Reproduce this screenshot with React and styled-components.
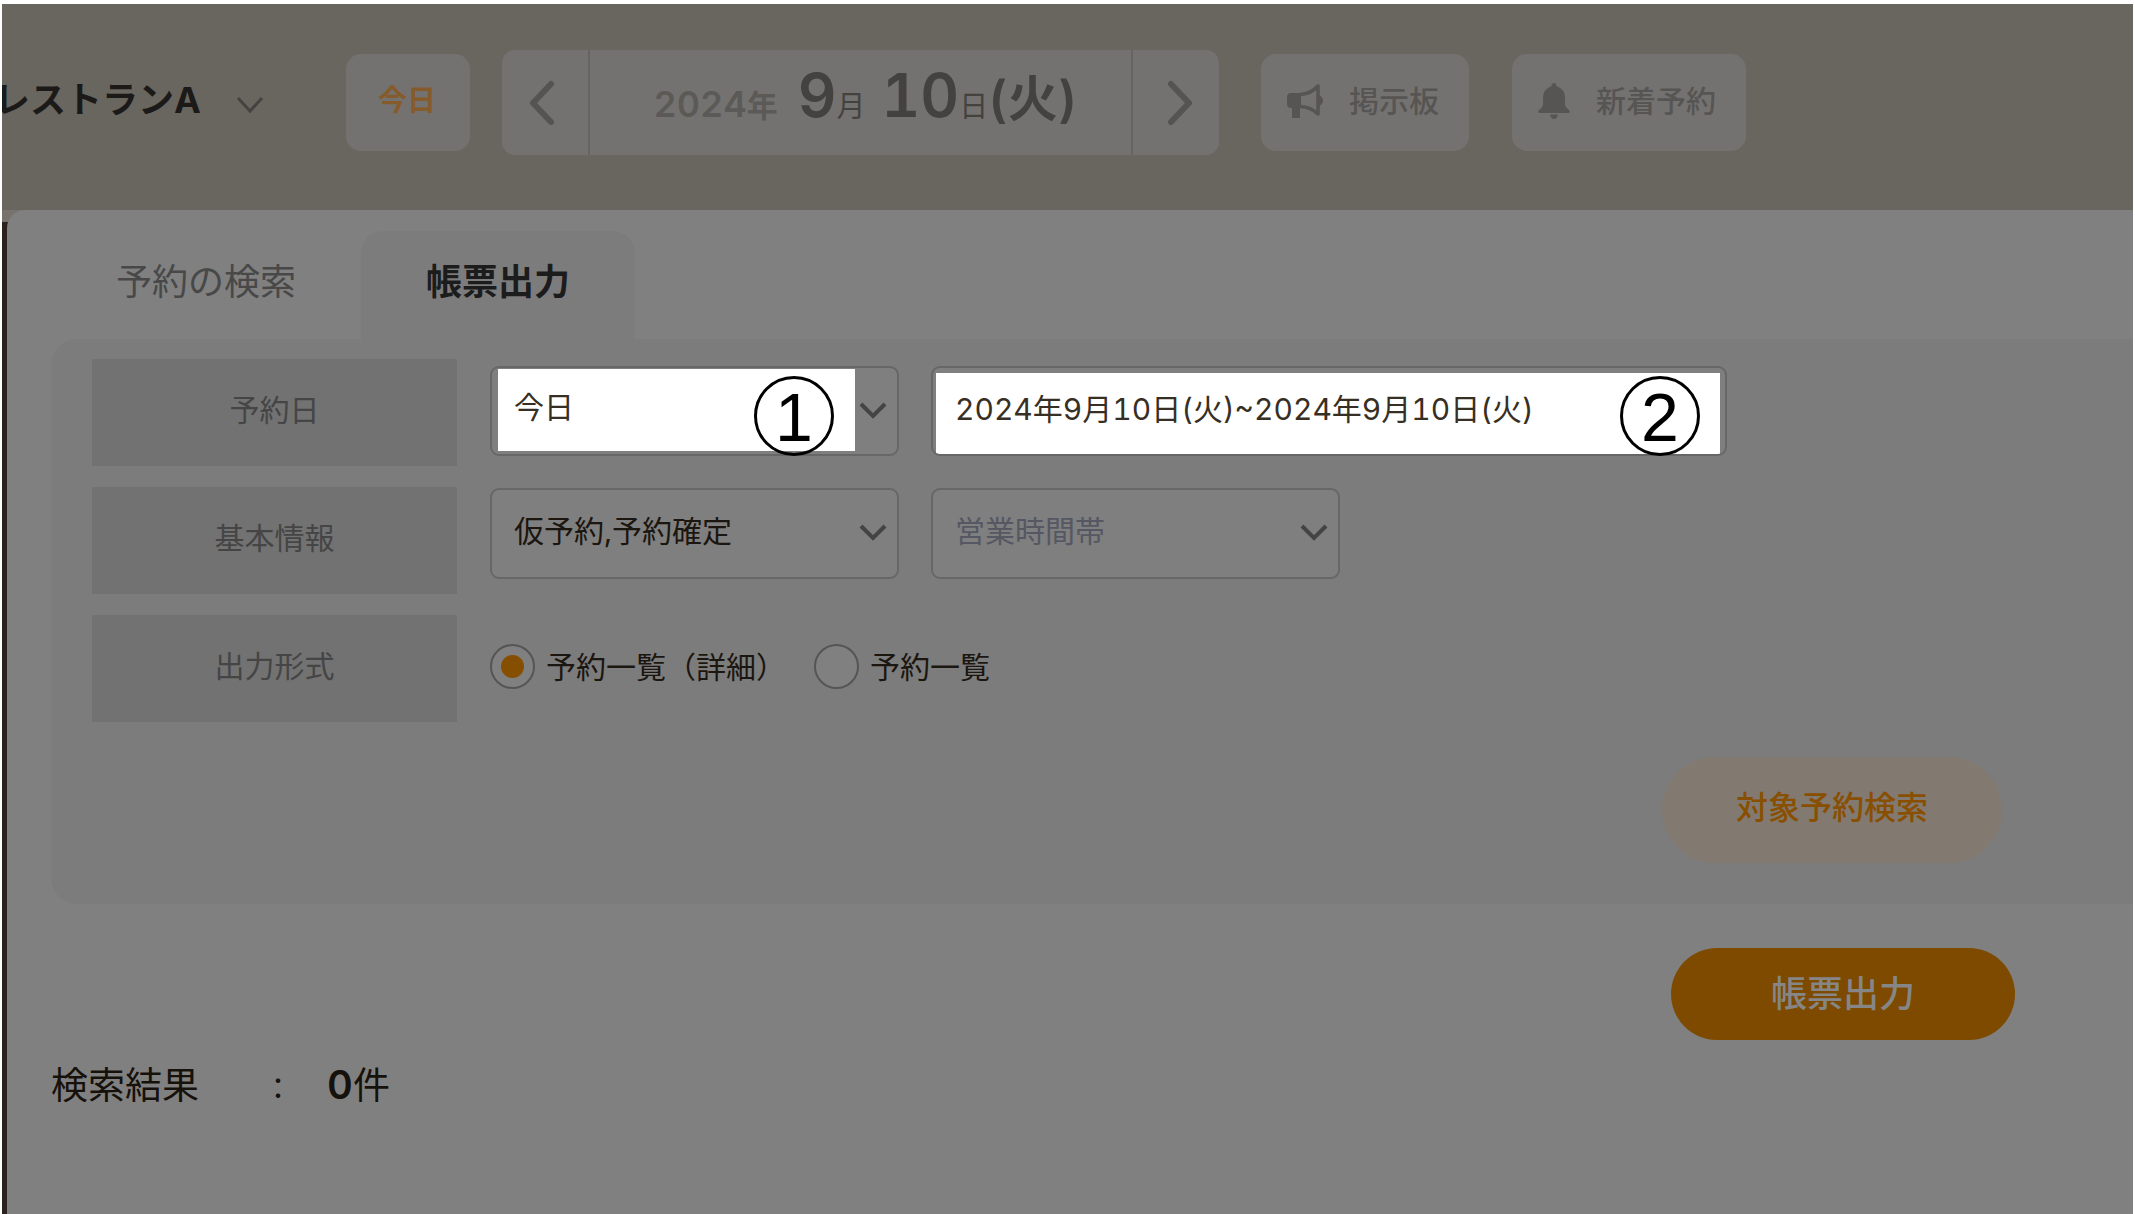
import React from "react";
import styled, { createGlobalStyle } from "styled-components";

const GlobalStyle = createGlobalStyle`
  *, *::before, *::after { box-sizing: border-box; }
  body {
    margin: 0;
    background: #fff;
    font-family: "Inter", "Noto Sans CJK JP", sans-serif;
    font-variant-numeric: tabular-nums;
  }
  button, input, select { font: inherit; margin: 0; }
  button { cursor: pointer; border: 0; }
`;

const Screen = styled.div`
  display: flex;
  flex-direction: column;
  min-height: 100vh;
  padding: 4px 2px 0;
  overflow: hidden;
`;

const Header = styled.header`
  display: flex;
  align-items: center;
  height: 206px;
  padding-bottom: 9px;
  background: #69655f;
  overflow: hidden;
  white-space: nowrap;
`;

const StoreButton = styled.button`
  display: flex;
  align-items: center;
  gap: 35px;
  flex: none;
  margin: 0 82px 0 -8px;
  padding: 0 0 6px;
  background: none;
  color: #1b1a19;
  font-size: 36px;
  font-weight: 700;
  line-height: 48px;

  svg { margin-top: 10px; }
`;

const HeaderButton = styled.button`
  display: flex;
  align-items: center;
  gap: 26px;
  flex: none;
  height: 97px;
  margin-right: ${(p) => p.$after}px;
  padding: ${(p) => (p.$icon ? "0 30px 4px 26px" : "0 34px 4px 32px")};
  border-radius: 15px;
  background: #747270;
  color: ${(p) => (p.$accent ? "#855b2c" : "#575553")};
  font-size: ${(p) => (p.$accent ? 29 : 30)}px;
  font-weight: ${(p) => (p.$accent ? 700 : 500)};
  line-height: 40px;
`;

const DateGroup = styled.div`
  display: flex;
  flex: none;
  height: 105px;
  margin-right: 42px;
  border-radius: 13px;
  background: #747270;
  overflow: hidden;
`;

const DateArrow = styled.button`
  display: grid;
  place-items: center;
  width: 86px;
  padding: 0;
  background: none;
  color: #565452;
`;

const DateButton = styled.button`
  display: flex;
  align-items: baseline;
  justify-content: center;
  width: 545px;
  padding: 7px 0 0 10px;
  border: solid #666461;
  border-width: 0 2px;
  background: none;
  color: #44423f;
  line-height: 76px;
`;

const Year = styled.span`
  margin-right: 20px;
  color: #5c5a57;
  font-size: 31px;
  font-weight: 700;
`;

const YearDigits = styled.span`
  font-size: 36px;
  font-weight: 600;
`;

const DayNumber = styled.span`
  margin-left: ${(p) => p.$gap || 0}px;
  font-size: 60px;
  font-weight: 600;
`;

const DayUnit = styled.span`
  font-size: 29px;
  font-weight: 400;
`;

const Weekday = styled.span`
  font-size: 50px;
  font-weight: 600;
`;

const Body = styled.div`
  display: flex;
  flex: 1;
  padding-left: 5px;
  background: linear-gradient(#77726b 12px, #29221e 12px);
`;

const Page = styled.main`
  flex: 1;
  min-width: 0;
  padding: 21px 0 40px 44px;
  border-top-left-radius: 18px;
  background: #808080;
`;

const Tabs = styled.div`
  display: flex;
`;

const Tab = styled.button`
  height: 108px;
  padding: 0 65px 6px;
  border-radius: 22px 22px 0 0;
  background: ${(p) => (p.$active ? "#7c7c7c" : "transparent")};
  color: ${(p) => (p.$active ? "#1c1c1c" : "#484848")};
  font-size: 36px;
  font-weight: ${(p) => (p.$active ? 700 : 400)};
  line-height: 48px;
`;

const SearchForm = styled.form`
  padding: 20px 0 41px 41px;
  border-radius: 26px 0 0 26px;
  background: #7c7c7c;
`;

const Rows = styled.div`
  display: flex;
  flex-direction: column;
  gap: 21px;
`;

const Row = styled.div`
  display: grid;
  grid-template-columns: 365px 1fr;
  column-gap: 33px;
  align-items: start;
`;

const RowLabel = styled.div`
  display: grid;
  place-items: center;
  height: 107px;
  padding-bottom: 6px;
  background: #727272;
  color: #454545;
  font-size: 30px;
  line-height: 40px;
`;

const Fields = styled.div`
  display: flex;
  gap: 32px;
  padding-top: ${(p) => p.$top || 0}px;
`;

const Field = styled.div`
  position: relative;
  display: flex;
  width: ${(p) => (p.$wide ? 796 : 409)}px;
`;

const controlStyle = `
  appearance: none;
  width: 100%;
  border: 2px solid #676767;
  border-radius: 9px;
  outline: 0;
  font-size: 30px;
  line-height: 40px;
`;

const Select = styled.select`
  ${controlStyle}
  height: ${(p) => (p.$lit ? 90 : 91)}px;
  padding: 0 22px ${(p) => (p.$lit ? 8 : 5)}px;
  background: ${(p) =>
    p.$lit ? "linear-gradient(#fff, #fff) 6px 1px / 357px 82px no-repeat #7f7f7f" : "#7f7f7f"};
  color: ${(p) => (p.$empty ? "#555763" : p.$lit ? "#382f24" : "#1b160f")};
`;

const DateRange = styled.input`
  ${controlStyle}
  height: 90px;
  padding: 0 22px 9px;
  background: linear-gradient(#fff, #fff) 3px 5px / 784px 81px no-repeat #7f7f7f;
  color: #382f24;
`;

const FieldArrow = styled.svg`
  position: absolute;
  right: 11px;
  top: 35px;
  color: #444;
  pointer-events: none;
`;

const Marker = styled.span`
  position: absolute;
  top: 10px;
  right: ${(p) => (p.$wide ? 27 : 65)}px;
  width: 80px;
  height: 80px;
  border: 3px solid #000;
  border-radius: 50%;
  color: #000;
  font-family: "Liberation Sans", sans-serif;
  font-size: 68px;
  line-height: 76px;
  text-align: center;
  pointer-events: none;
`;

const RadioGroup = styled.div`
  display: flex;
  gap: 28px;
  height: 103px;
  align-items: center;
`;

const RadioLabel = styled.label`
  display: flex;
  align-items: center;
  gap: 11px;
  color: #1b160f;
  font-size: 30px;
  line-height: 44px;
`;

const Radio = styled.input`
  appearance: none;
  width: 45px;
  height: 45px;
  border: 2px solid #555;
  border-radius: 50%;
  background: #808080;
  &:checked {
    background: radial-gradient(circle, #854e00 11px, #808080 12px);
  }
`;

const SearchActions = styled.div`
  display: flex;
  justify-content: flex-end;
  padding: 35px 131px 0 0;
`;

const SearchButton = styled.button`
  width: 340px;
  height: 106px;
  padding: 0 0 4px;
  border-radius: 53px;
  background: #827971;
  color: #894f00;
  font-size: 32px;
  font-weight: 500;
  line-height: 44px;
`;

const ExportActions = styled.div`
  display: flex;
  justify-content: flex-end;
  padding: 44px 118px 0 0;
`;

const ExportButton = styled.button`
  width: 344px;
  height: 92px;
  padding: 0;
  border-radius: 46px;
  background: #7d4a00;
  color: #868686;
  font-size: 36px;
  font-weight: 500;
  line-height: 48px;
`;

const Result = styled.p`
  display: flex;
  align-items: baseline;
  margin: 18px 0 0;
  color: #16110a;
  font-size: 37px;
  line-height: 54px;
`;

const ResultColon = styled.span`
  margin: 0 34px 0 64px;
  font-size: 30px;
  font-family: "Noto Sans CJK JP", sans-serif;
`;

const ResultCount = styled.strong`
  font-size: 40px;
  font-weight: 600;
`;

const Chevron = () => (
  <svg width="28" height="20" viewBox="0 0 28 20" fill="none" aria-hidden="true">
    <path d="M2 3 14 16 26 3" stroke="#454341" strokeWidth="3" />
  </svg>
);

const SelectArrow = () => (
  <FieldArrow width="30" height="20" viewBox="0 0 30 20" fill="none" aria-hidden="true">
    <path d="M3 3 15 15 27 3" stroke="currentColor" strokeWidth="4" />
  </FieldArrow>
);

const ArrowIcon = ({ d }) => (
  <svg width="34" height="48" viewBox="0 0 34 48" fill="none" aria-hidden="true">
    <path d={d} stroke="currentColor" strokeWidth="6" strokeLinecap="round" strokeLinejoin="round" />
  </svg>
);

const MegaphoneIcon = () => (
  <svg width="36" height="36" viewBox="0 0 36 36" fill="none" aria-hidden="true">
    <path
      d="M4 10H14V25H13V35H5V25H4Q0 25 0 21V14Q0 10 4 10Z"
      fill="currentColor"
    />
    <path d="M13 11.5Q24 11 31 3V31Q24 24 13 23.5" stroke="currentColor" strokeWidth="3.6" strokeLinejoin="round" />
    <path d="M32 12Q36 14 36 17.5Q36 21 32 23Z" fill="currentColor" />
  </svg>
);

const BellIcon = () => (
  <svg width="32" height="36" viewBox="0 0 32 36" fill="currentColor" aria-hidden="true">
    <path d="M16 0Q18.500 0 18.500 3Q27 6 27 15V22Q28 25 31 27Q33 30 30 30H2Q-1 30 1 27Q4 25 5 22V15Q5 6 13.500 3Q13.500 0 16 0Z" />
    <path d="M12 31.500H20Q19 36 16 36Q13 36 12 31.500Z" />
  </svg>
);

export default function App() {
  return (
    <>
      <GlobalStyle />
      <Screen>
        <Header>
          <StoreButton type="button">
            レストランA
            <Chevron />
          </StoreButton>
          <HeaderButton type="button" $accent $after={32}>今日</HeaderButton>
          <DateGroup>
            <DateArrow type="button" aria-label="前の日">
              <ArrowIcon d="M23 5 5 24 23 43" />
            </DateArrow>
            <DateButton type="button">
              <Year><YearDigits>2024</YearDigits>年</Year>
              <DayNumber>9</DayNumber>
              <DayUnit>月</DayUnit>
              <DayNumber $gap={16}>10</DayNumber>
              <DayUnit>日</DayUnit>
              <Weekday>(火)</Weekday>
            </DateButton>
            <DateArrow type="button" aria-label="次の日">
              <ArrowIcon d="M12 5 30 24 12 43" />
            </DateArrow>
          </DateGroup>
          <HeaderButton type="button" $icon $after={43}>
            <MegaphoneIcon />
            掲示板
          </HeaderButton>
          <HeaderButton type="button" $icon $after={0}>
            <BellIcon />
            新着予約
          </HeaderButton>
        </Header>

        <Body>
          <Page>
            <Tabs role="tablist">
              <Tab type="button" role="tab" aria-selected="false">予約の検索</Tab>
              <Tab type="button" role="tab" aria-selected="true" $active>帳票出力</Tab>
            </Tabs>

            <SearchForm onSubmit={(e) => e.preventDefault()}>
              <Rows>
                <Row>
                  <RowLabel id="label-date">予約日</RowLabel>
                  <Fields $top={7}>
                    <Field>
                      <Select $lit aria-labelledby="label-date" defaultValue="today">
                        <option value="today">今日</option>
                      </Select>
                      <SelectArrow />
                      <Marker>1</Marker>
                    </Field>
                    <Field $wide>
                      <DateRange
                        type="text"
                        aria-labelledby="label-date"
                        defaultValue="2024年9月10日(火)~2024年9月10日(火)"
                      />
                      <Marker $wide>2</Marker>
                    </Field>
                  </Fields>
                </Row>
                <Row>
                  <RowLabel id="label-basic">基本情報</RowLabel>
                  <Fields $top={1}>
                    <Field>
                      <Select aria-labelledby="label-basic" defaultValue="status">
                        <option value="status">仮予約,予約確定</option>
                      </Select>
                      <SelectArrow />
                    </Field>
                    <Field>
                      <Select $empty aria-labelledby="label-basic" defaultValue="">
                        <option value="">営業時間帯</option>
                      </Select>
                      <SelectArrow />
                    </Field>
                  </Fields>
                </Row>
                <Row>
                  <RowLabel id="label-format">出力形式</RowLabel>
                  <RadioGroup role="radiogroup" aria-labelledby="label-format">
                    <RadioLabel>
                      <Radio type="radio" name="format" defaultChecked />
                      予約一覧（詳細）
                    </RadioLabel>
                    <RadioLabel>
                      <Radio type="radio" name="format" />
                      予約一覧
                    </RadioLabel>
                  </RadioGroup>
                </Row>
              </Rows>
              <SearchActions>
                <SearchButton type="submit">対象予約検索</SearchButton>
              </SearchActions>
            </SearchForm>

            <ExportActions>
              <ExportButton type="button">帳票出力</ExportButton>
            </ExportActions>
            <Result>
              検索結果
              <ResultColon>：</ResultColon>
              <ResultCount>0</ResultCount>件
            </Result>
          </Page>
        </Body>
      </Screen>
    </>
  );
}
